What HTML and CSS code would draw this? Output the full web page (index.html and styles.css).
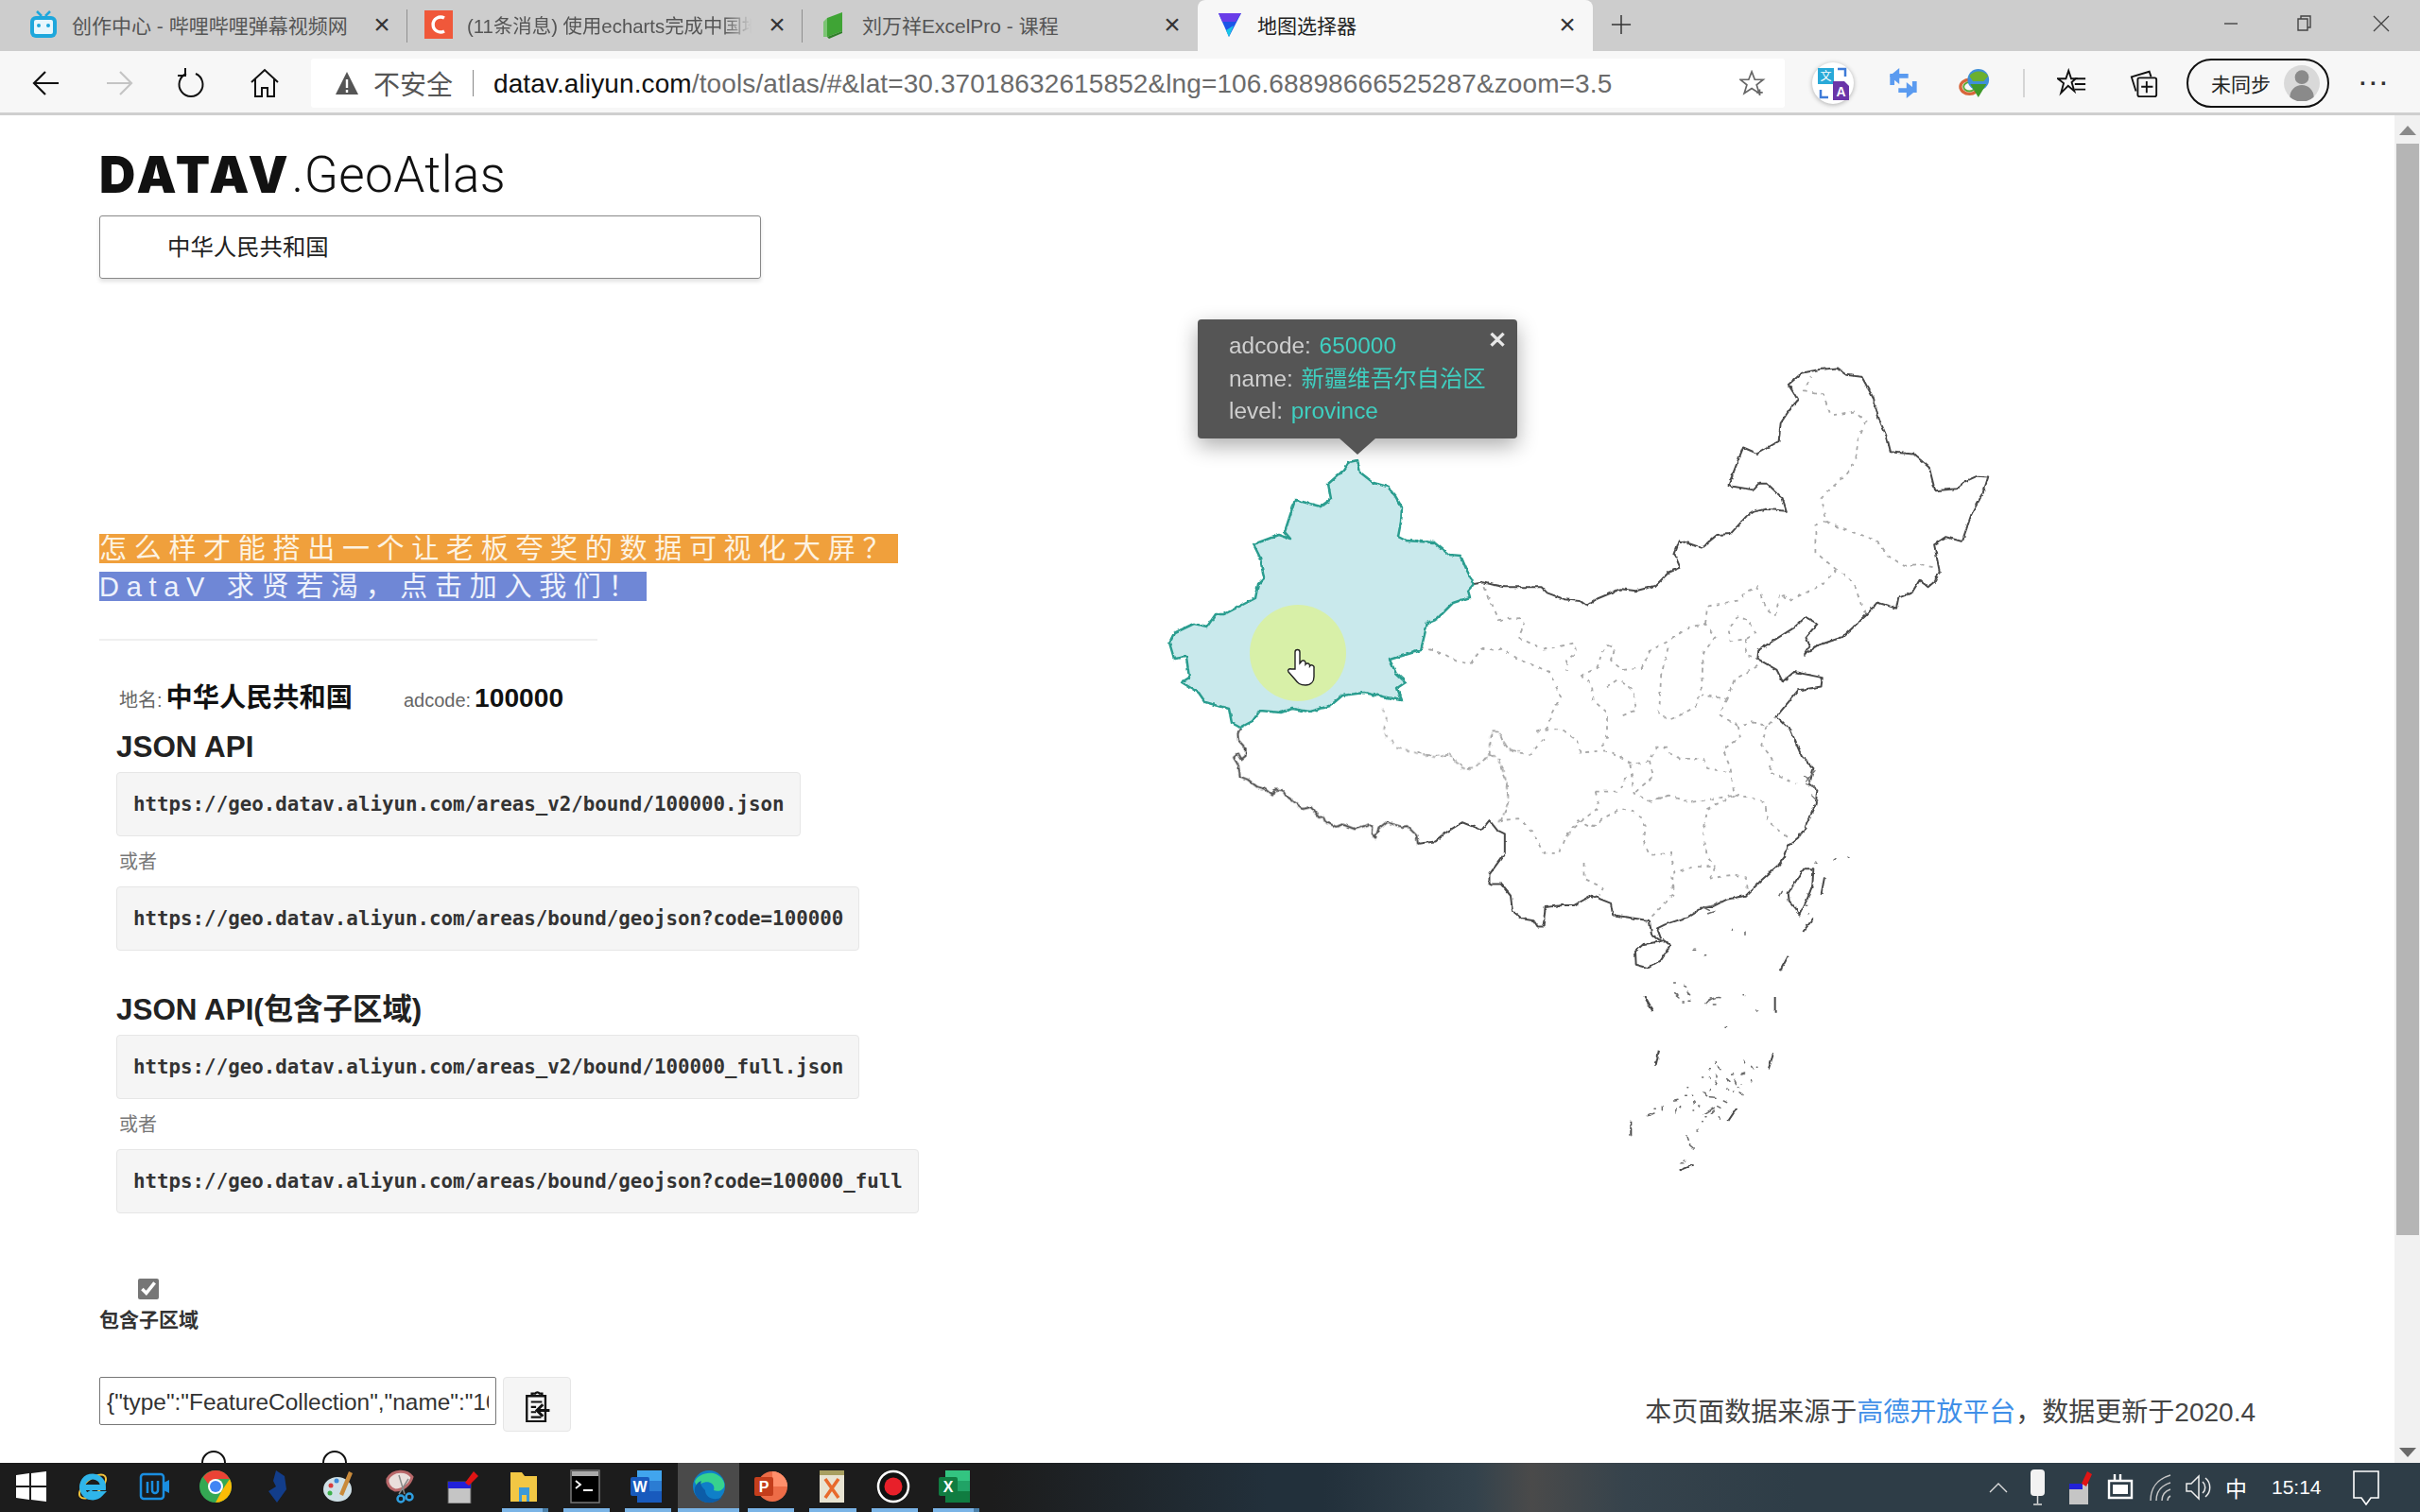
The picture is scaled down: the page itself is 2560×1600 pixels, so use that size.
FILE: index.html
```html
<!DOCTYPE html>
<html lang="zh-CN">
<head>
<meta charset="utf-8">
<title>地图选择器</title>
<link rel="stylesheet" href="styles.css">
</head>
<body>
<div class="screen">
  <header class="tabstrip">
    <div class="tab tab-first">
      <svg class="fav" viewBox="0 0 30 30"><path d="M8 1l5 5M22 1l-5 5" stroke="#1ea7dc" stroke-width="2.5" fill="none"/><rect x="1" y="6" width="28" height="23" rx="6" fill="#1ea7dc"/><rect x="5" y="10" width="20" height="15" rx="2" fill="#e8f7fd"/><circle cx="10" cy="16" r="2" fill="#1ea7dc"/><circle cx="20" cy="16" r="2" fill="#1ea7dc"/></svg>
      <span class="tab-title">创作中心 - 哔哩哔哩弹幕视频网</span><span class="tab-x">×</span>
    </div>
    <div class="tab">
      <svg class="fav" viewBox="0 0 30 30"><rect y="0" width="30" height="30" fill="#f0583a"/><path d="M21 8a8 8 0 1 0 0 14" stroke="#fff" stroke-width="3.4" fill="none"/></svg>
      <span class="tab-title tab-fade">(11条消息) 使用echarts完成中国地图</span><span class="tab-x">×</span>
    </div>
    <div class="tab tab-last">
      <svg class="fav" viewBox="0 0 30 30"><path d="M8 8L24 2v20L8 28z" fill="#3fa435"/><path d="M4 12l4-4v20H4z" fill="#7cc474"/><path d="M8 28l16-6v2L10 30z" fill="#2f7f28"/></svg>
      <span class="tab-title">刘万祥ExcelPro - 课程</span><span class="tab-x">×</span>
    </div>
    <div class="tab tab-active">
      <svg class="fav" viewBox="0 0 30 30"><path d="M4 3h24L15 28z" fill="#1c55e8"/><path d="M4 3h24l-6 9H8z" fill="#6a3de8"/><path d="M12 21l3 7 5-12z" fill="#19c6e6"/></svg>
      <span class="tab-title">地图选择器</span><span class="tab-x">×</span>
    </div>
    <svg class="newtab" viewBox="0 0 24 24"><path d="M12 1v22M1 12h22" stroke="#333" stroke-width="1.6"/></svg>
    <div class="winctl">
      <svg viewBox="0 0 20 20"><path d="M3 10h14" stroke="#444" stroke-width="1.4"/></svg>
      <svg viewBox="0 0 20 20"><path d="M4 5h10v12H4zM7 5V2h10v12h-3" stroke="#444" stroke-width="1.4" fill="none"/></svg>
      <svg viewBox="0 0 20 20"><path d="M2 2l16 16M18 2L2 18" stroke="#444" stroke-width="1.3"/></svg>
    </div>
  </header>

  <nav class="toolbar">
    <svg class="tb tb-back" viewBox="0 0 32 32"><path d="M29 16H4M15 4L3 16l12 12" stroke="#111" stroke-width="2.2" fill="none"/></svg>
    <svg class="tb tb-fwd" viewBox="0 0 32 32"><path d="M3 16h25M17 4l12 12-12 12" stroke="#c4c4c4" stroke-width="2.2" fill="none"/></svg>
    <svg class="tb tb-reload" viewBox="0 0 32 32"><path d="M11 6a12.500 12.500 0 1 0 10 0" stroke="#111" stroke-width="2" fill="none"/><path d="M10 0v8H2" stroke="#111" stroke-width="2" fill="none"/></svg>
    <svg class="tb tb-home" viewBox="0 0 32 32"><path d="M2 15L16 2l14 13M6 12v18h7v-9h6v9h7V12" stroke="#111" stroke-width="2" fill="none"/></svg>
    <div class="address">
      <svg class="warn" viewBox="0 0 26 26"><path d="M13 1L25 25H1z" fill="#555"/><path d="M13 9v9M13 20v3" stroke="#fff" stroke-width="2.400"/></svg>
      <span class="insecure">不安全</span>
      <span class="addr-sep"></span>
      <span class="url"><b class="host">datav.aliyun.com</b>/tools/atlas/#&amp;lat=30.37018632615852&amp;lng=106.68898666525287&amp;zoom=3.5</span>
      <svg class="addstar" viewBox="0 0 30 30"><path d="M14 2l3.500 9h9.500l-7.500 6 3 9.500L14 21l-8.500 5.500 3-9.500L1 11h9.500z" stroke="#666" stroke-width="1.800" fill="none"/><path d="M23 22v7M19.500 25.500h7" stroke="#666" stroke-width="1.800"/></svg>
    </div>
    <div class="ext ext-translate">
      <svg viewBox="0 0 44 44"><rect x="6" y="6" width="17" height="17" fill="#29a9d8"/><text x="14.500" y="19" class="ext-t1">文</text><path d="M27 7h8v8M17 37H9v-8" stroke="#3e7bd8" stroke-width="2.500" fill="none"/><path d="M22 20h12l5 5v15H22z" fill="#6a35a8"/><text x="30.500" y="36" class="ext-t2">A</text></svg>
    </div>
    <svg class="tb ext-sync" viewBox="0 0 36 36"><path d="M6 20V10h18M31 16v10H13" stroke="#5b9bf0" stroke-width="5" fill="none"/><path d="M14 1L3 10l11 9zM22 17l11 9-11 9z" fill="#5b9bf0"/></svg>
    <svg class="tb ext-idm" viewBox="0 0 36 36"><ellipse cx="12" cy="22" rx="10" ry="8" fill="none" stroke="#d8663a" stroke-width="3.500"/><ellipse cx="12" cy="22" rx="6.500" ry="5" fill="none" stroke="#58a832" stroke-width="2"/><circle cx="22" cy="14" r="12" fill="#3f8fd8"/><path d="M12 10c5-7 16-7 21 0l-5 6H16z" fill="#6cb02e"/><path d="M13 19l9 15 9-15z" fill="#3f9a2a"/></svg>
    <span class="tb-sep"></span>
    <svg class="tb tb-fav" viewBox="0 0 34 34"><path d="M13 3l3 9h5l-4.500 4 3 10-7-6-8 8 3-11L1 12h9z" stroke="#111" stroke-width="2" fill="none"/><path d="M20 12h12M20 18h12M20 24h12" stroke="#111" stroke-width="2"/></svg>
    <svg class="tb tb-coll" viewBox="0 0 34 34"><path d="M8 26L3 10l20-6 2 6" stroke="#111" stroke-width="2" fill="none"/><rect x="10" y="11" width="21" height="21" rx="2" stroke="#111" stroke-width="2" fill="#f7f7f7"/><path d="M20 15v13M14 21h13" stroke="#111" stroke-width="2"/></svg>
    <div class="profile">
      <span class="profile-text">未同步</span>
      <svg class="avatar" viewBox="0 0 36 36"><circle cx="18" cy="18" r="18" fill="#d9d9d9"/><circle cx="18" cy="12" r="7" fill="#8a8a8a"/><path d="M6 32a12 12 0 0 1 24 0 18 18 0 0 1-24 0z" fill="#8a8a8a"/></svg>
    </div>
    <span class="more">···</span>
  </nav>

  <div class="viewport">
    <main class="page">
      <svg class="map" viewBox="0 122 2533 1426">
        <defs>
          <filter id="wiggle" filterUnits="userSpaceOnUse" x="1200" y="340" width="950" height="950">
            <feTurbulence type="fractalNoise" baseFrequency="0.16" numOctaves="2" seed="4"/>
            <feDisplacementMap in="SourceGraphic" scale="3.5" xChannelSelector="R" yChannelSelector="G"/>
          </filter>
        </defs>
        <g filter="url(#wiggle)">
        <g transform="translate(1500 360) scale(.40816)">
          <g class="prov">
            <polyline points="170,640 178,660 190,680 210,725 240,722 270,720 275,740 260,770 290,785 325,800 365,795 405,785 410,810 385,830 385,855"/>
            <polyline points="5,795 40,805 70,815 100,832 135,840 165,800 195,805 220,800 265,830 305,845 340,860 352,885 370,925 345,970 335,1005 300,1015 340,1010 375,1010 415,1040 420,1070 470,1065 505,1070 530,1085 560,1100 600,1090 620,1055 650,1055"/>
            <polyline points="0,1070 40,1078 80,1075 100,1095 130,1110 160,1098 185,1075 190,1015 210,1015 220,1040 235,1060 265,1070 290,1075 330,1030"/>
            <polyline points="185,1075 210,1085 218,1120 230,1150 235,1200 215,1245 260,1240 285,1262 300,1280 325,1330 365,1330 380,1290 415,1245 450,1265 480,1240 525,1215 565,1225 590,1260 585,1300 600,1335 655,1330 665,1380 690,1372 720,1365 770,1365 760,1395 820,1385 850,1395 855,1425"/>
            <polyline points="420,870 450,890 455,935 490,965 490,1030 470,1065"/>
            <polyline points="420,870 465,850 475,815 490,790 510,800 500,830 530,855 580,850 600,805 640,785 665,770 700,745 745,735 770,770 740,810 735,900 720,950 680,972 650,985 625,970 630,870 650,790"/>
            <polyline points="745,735 750,690 790,682 830,675 855,650 880,640 905,700 925,715 940,655 960,675 1005,655 1050,630 1085,595 1130,630 1150,690 1165,710"/>
            <polyline points="1085,595 1030,550 1030,480 1060,470 1045,410 1075,380 1110,350 1135,310 1140,260 1160,210 1130,185 1070,195 1050,140 1000,130 1020,95"/>
            <polyline points="1060,470 1100,490 1150,505 1190,520 1220,560 1260,585 1300,580 1340,590"/>
            <polyline points="830,715 805,750 810,780 850,775 875,760 860,730 830,715"/>
            <polyline points="850,775 850,815 880,825"/>
            <polyline points="880,845 820,880 800,930 735,920"/>
            <polyline points="800,930 780,970 830,1000 865,990 905,1000 930,975"/>
            <polyline points="830,1000 835,1030 790,1060 810,1110 820,1180 860,1185 900,1200 905,1245 960,1290"/>
            <polyline points="820,1180 750,1215 740,1280 750,1340 770,1365"/>
            <polyline points="650,1180 600,1195 560,1175 550,1100"/>
            <polyline points="460,1170 520,1170 545,1120"/>
            <polyline points="460,1170 470,1210 420,1250 380,1290"/>
            <polyline points="600,1195 650,1180 700,1198 730,1195 820,1180"/>
            <polyline points="600,1090 610,1130 560,1175"/>
            <polyline points="650,1070 680,1085 740,1085 750,1110 810,1120"/>
            <polyline points="905,1000 890,1050 920,1085 910,1120 980,1150"/>
            <polyline points="590,1510 660,1440 660,1380"/>
            <polyline points="430,1355 430,1395 480,1420 470,1440"/>
            <polyline points="490,900 520,880 560,910 565,960 525,975"/>
          </g>
          <polyline class="coast" points="145,632 170,628 195,634 225,640 320,640 335,655 380,672 420,676 437,688 465,670 525,645 565,650 615,637 650,602 680,590 665,555 678,520 705,528 735,538 775,505 810,502 850,458 870,445 900,438 955,443 945,410 905,372 885,372 870,388 820,380 805,375 843,278 880,294 935,262 940,215 960,185 985,155 960,115 995,85 1040,76 1085,72 1110,90 1150,95 1165,122 1180,150 1195,205 1215,250 1225,290 1285,295 1325,330 1340,390 1395,385 1420,365 1450,352 1478,354 1465,395 1435,450 1410,522 1368,510 1338,530 1352,600 1340,625 1322,640 1300,622 1280,655 1245,668 1240,695 1190,680 1160,715 1100,770 1040,790 1000,815 1015,790 1005,770 1035,735 1005,718 975,745 935,770 880,805 878,825 930,855 945,885 975,860 1048,875 1045,898 985,908 930,975 965,1010 995,1080 1025,1110 1015,1150 1035,1165 1030,1205 1000,1270 985,1290 960,1310 950,1340 935,1360 890,1400 850,1440 800,1450 760,1470 740,1470 700,1495 640,1515 620,1525 630,1552"/>
          <polyline class="coast" points="600,1505 505,1490 500,1460 450,1440 405,1465 375,1465 330,1470 325,1520 310,1520 300,1505 270,1500 245,1480 240,1440 215,1410 185,1410 185,1385 225,1330 225,1280 205,1270 185,1245 165,1270 115,1250 75,1275 45,1300 0,1305"/>
          <polyline class="coast" points="600,1505 605,1540 628,1556"/>
          <path class="coast coast-thin" d="M1000 1130l20 15M1005 1150l25 10M1020 1180l15 15M1030 1115l-25 30M740 1470l30 -6"/>
        </g>
        <g transform="translate(1270 740) scale(.33333)">
          <g class="prov">
            <polyline points="578,30 590,60 580,105 620,150 685,170 750,185 790,175 825,215 850,225 915,180 940,180 965,240 975,300 978,330 965,360 945,390"/>
            <polyline points="915,180 920,100 945,100 965,140 990,165 1020,165"/>
          </g>
          <polyline class="coast" points="125,92 118,110 120,130 143,155 143,180 130,190 120,172 105,185 120,210 125,245 150,255 180,278 205,285 228,305 235,287 260,288 270,305 290,320 325,348 350,342 375,375 390,372 395,388 430,405 450,397 490,412 535,397 547,405 545,430 555,440 565,410 590,390 640,405 655,402 685,432 690,460"/>
        </g>
        <g transform="translate(1560 880) scale(.33333)">
          <polygon class="coast" points="600,345 620,360 600,395 590,410 550,433 512,422 510,380 535,358 580,350"/>
          <polygon class="coast" points="1045,118 1075,118 1072,170 1055,215 1030,265 1020,245 998,220 995,195 1030,140"/>
          <path class="coast" d="M1110 145L1100 198M1075 275L1042 318M995 395L968 445M953 525V575M948 705L932 755M832 878L805 918M496 920V965M585 695L575 740M538 522L565 570M650 1075L692 1058"/>
          <path class="dots" d="M1080 100h3M1140 90l6 -4M1183 82h2M968 205l8 -15M1052 235h3M1058 260h2M820 305v8M858 318v10M693 376h8M730 392h4M632 483h5M665 490l6 3M635 512l10 8M640 522l8 6M675 510l8 8M660 543h4M678 535h3M735 545q15 -20 45 -18M757 549h8M852 518h2M893 570h3M795 622h6M766 730v4M745 755h3M770 745l10 10M722 780h3M745 780h3M768 775v8M765 795l4 8M800 785l10 8M815 772l6 -2M845 772l12 -4M856 730l4 4M878 745l6 10M895 748h2M878 790v4M825 790l5 10M845 802h3M800 820h3M820 823h3M835 812h2M840 828l12 8M675 812h2M725 828l12 8M748 818v3M745 842l20 2M665 838h8M690 838h2M635 852l10 -2M695 858l2 4M710 870l4 4M690 885h5M650 875h3M638 880l2 12M595 872v12M570 880h4M550 902l20 -8M730 895l30 -18M760 885l-10 10M770 875l10 5M790 855l10 5M775 905l3 8M732 905h3M722 920h2M705 948h3M675 968l5 15M682 995l12 10M655 1052h6M665 1047h3"/>
          <path class="dots" d="M725 240l20 10M740 260l18 -6"/>
        </g>
        <polygon class="xj" points="1436,487 1439,500 1453,511 1468,515 1476,525 1483,537 1482,552 1479,568 1487,572 1517,574 1533,587 1545,588 1552,604 1559,618 1553,625 1555,632 1537,638 1520,655 1510,659 1503,688 1470,698 1477,713 1487,722 1478,728 1483,741 1467,738 1443,733 1420,736 1407,747 1385,753 1367,750 1355,754 1333,752 1325,763 1312,770 1303,765 1300,750 1275,743 1268,733 1250,722 1258,717 1255,695 1242,697 1237,680 1242,670 1263,660 1277,663 1286,650 1295,650 1328,633 1331,618 1337,612 1333,590 1326,576 1353,566 1365,570 1359,563 1370,529 1397,536 1408,528 1405,512 1422,497 1427,489"/>
        </g>
        <circle class="ripple" cx="1373" cy="691" r="51"/>
        <path class="hand" transform="translate(-3 14)" d="M1373 694v-18a2.500 2.500 0 0 1 5 0v12l1 -1a2.500 2.500 0 0 1 5 1v1a2.500 2.500 0 0 1 4.500 1v1a2.500 2.500 0 0 1 4.500 2v9c0 5 -3 9 -9 9s-8 -2 -11 -6l-7 -8c-1.500 -2 1 -4 3 -3z"/>
      </svg>

      <div class="sidebar">
        <h1 class="logo"><b>DATAV</b><span>.GeoAtlas</span></h1>
        <div class="search">中华人民共和国</div>
        <div class="ads">
          <span class="ad ad-orange">怎么样才能搭出一个让老板夸奖的数据可视化大屏？</span>
          <span class="ad ad-blue">DataV 求贤若渴，点击加入我们！</span>
        </div>
        <hr class="rule">
        <div class="place">
          <span class="place-l">地名:</span><b class="place-v">中华人民共和国</b>
          <span class="place-l place-gap">adcode:</span><b class="place-v">100000</b>
        </div>
        <section class="api">
          <h2>JSON API</h2>
          <code class="url-box box-a">https://geo.datav.aliyun.com/areas_v2/bound/100000.json</code>
          <p class="or">或者</p>
          <code class="url-box">https://geo.datav.aliyun.com/areas/bound/geojson?code=100000</code>
        </section>
        <section class="api api-next">
          <h2>JSON API(包含子区域)</h2>
          <code class="url-box">https://geo.datav.aliyun.com/areas_v2/bound/100000_full.json</code>
          <p class="or">或者</p>
          <code class="url-box">https://geo.datav.aliyun.com/areas/bound/geojson?code=100000_full</code>
        </section>
        <input class="check" type="checkbox" checked>
        <div class="check-label">包含子区域</div>
        <div class="json-row">
          <div class="json-input"><span>{"type":"FeatureCollection","name":"100000"</span></div>
          <button class="copy">
            <svg viewBox="0 0 30 38"><path d="M9 7V4h4a3 3 0 0 1 5 0h3v3zM5 7h20v30H3V7z" fill="none" stroke="#111" stroke-width="2.600"/><path d="M8 14h13M8 20h6M8 26h6M8 32h12" stroke="#111" stroke-width="2.400"/><path d="M30 24H16M22 17l-7 7 7 7" stroke="#111" stroke-width="3.400" fill="none"/></svg>
          </button>
        </div>
        <div class="radios"><span class="radio"></span><span class="radio"></span></div>
      </div>

      <div class="popup">
        <span class="popup-x">✕</span>
        <div>adcode: <em>650000</em></div>
        <div>name: <em>新疆维吾尔自治区</em></div>
        <div>level: <em>province</em></div>
      </div>
      <p class="source">本页面数据来源于<a>高德开放平台</a>，数据更新于2020.4</p>
    </main>
    <aside class="scrollbar">
      <span class="arrow-up"></span>
      <span class="thumb"></span>
      <span class="arrow-down"></span>
    </aside>
  </div>

  <footer class="taskbar">
    <div class="apps">
      <div class="app"><svg viewBox="0 0 36 36"><path d="M2 6l14-2v13H2zM18 4l16-2v15H18zM2 19h14v13L2 30zM18 19h16v15l-16-2z" fill="#fff"/></svg></div>
      <div class="app"><svg viewBox="0 0 36 36"><ellipse cx="18" cy="18" rx="17" ry="8" transform="rotate(-40 18 18)" fill="none" stroke="#f0c23c" stroke-width="2"/><path d="M9 19h20a11 11 0 1 0-3 7h-6a6 6 0 0 1-6-3" fill="none" stroke="#2fb5ea" stroke-width="6"/></svg></div>
      <div class="app"><svg viewBox="0 0 36 36"><rect x="4" y="5" width="24" height="26" rx="3" fill="none" stroke="#1a8ee0" stroke-width="2.500"/><path d="M11 13v12M16 12v10a3 3 0 0 0 6 0V12" stroke="#1a8ee0" stroke-width="2.500" fill="none"/><path d="M28 14l6-3v14l-6-3z" fill="#1a8ee0"/></svg></div>
      <div class="app"><svg viewBox="0 0 36 36"><circle cx="18" cy="18" r="17" fill="#34a853"/><path d="M18 1a17 17 0 0 1 15 9H18l-8 5-5-7A17 17 0 0 1 18 1z" fill="#ea4335"/><path d="M33 10a17 17 0 0 1-15 25l7-13z" fill="#fbbc05"/><circle cx="18" cy="18" r="8" fill="#fff"/><circle cx="18" cy="18" r="6" fill="#4285f4"/></svg></div>
      <div class="app"><svg viewBox="0 0 36 36"><path d="M17 1l9 6 2 14-10 14-9-12 8-5-3-6z" fill="#123d8a"/></svg></div>
      <div class="app"><svg viewBox="0 0 36 36"><ellipse cx="16" cy="21" rx="15" ry="13" fill="#cfe0e6"/><circle cx="9" cy="17" r="2.500" fill="#d83c3c"/><circle cx="15" cy="12" r="2.500" fill="#3c8ad8"/><circle cx="8" cy="25" r="2.500" fill="#3cb04a"/><path d="M28 2l4 2-10 24-4-2z" fill="#c98a3a"/></svg></div>
      <div class="app"><svg viewBox="0 0 36 36"><path d="M4 10C10 0 24 0 30 8c-2 8-10 14-18 14C6 20 3 15 4 10z" fill="#eadfdc" stroke="#b9686a" stroke-width="3"/><path d="M16 6l6 20M26 10l-10 16" stroke="#8a8a8a" stroke-width="1.500"/><circle cx="18" cy="31" r="3.500" fill="none" stroke="#2f9fe0" stroke-width="2.500"/><circle cx="27" cy="29" r="3.500" fill="none" stroke="#2f9fe0" stroke-width="2.500"/></svg></div>
      <div class="app"><svg viewBox="0 0 36 36"><rect x="3" y="13" width="24" height="23" fill="#c5c5c5" stroke="#555"/><rect x="3" y="13" width="24" height="7" fill="#2222d8"/><path d="M21 14l9-12 5 5-10 10z" fill="#e01414"/></svg></div>
      <div class="app app-run app-group"><svg viewBox="0 0 36 36"><path d="M4 3h12l3 4h13v27H4z" fill="#f2c744"/><path d="M13 19h11v15H13z" fill="#3c9ad8"/><rect x="16" y="27" width="5" height="7" fill="#f2c744"/></svg></div>
      <div class="app app-run"><svg viewBox="0 0 36 36"><rect x="3" y="1" width="30" height="34" fill="#000" stroke="#777" stroke-width="1.500"/><rect x="4" y="2" width="28" height="5" fill="#aaa"/><path d="M8 12l5 4-5 4M16 22h10" stroke="#fff" stroke-width="1.800" fill="none"/></svg></div>
      <div class="app app-run"><svg viewBox="0 0 36 36"><rect x="8" y="1" width="26" height="34" rx="2" fill="#2b7cd3"/><rect x="8" y="1" width="26" height="11" fill="#41a5ee"/><rect x="8" y="23" width="26" height="12" fill="#185abd"/><rect x="1" y="8" width="20" height="20" rx="2" fill="#185abd"/><text x="11" y="24" class="app-letter">W</text></svg></div>
      <div class="app app-run app-active"><svg viewBox="0 0 36 36"><circle cx="18" cy="18" r="17" fill="#0f7fc8"/><path d="M3 13C6 3 28 -2 34 14c2 8-6 10-11 8 3-9-12-13-17-2" fill="#37d28e"/><path d="M14 22c0 8 10 12 18 7-6 8-22 9-28-2-3-6 0-13 6-15-2 4 1 7 4 10z" fill="#0c5da8"/></svg></div>
      <div class="app app-run"><svg viewBox="0 0 36 36"><circle cx="20" cy="18" r="16" fill="#ed6c47"/><path d="M20 2a16 16 0 0 1 16 16H20z" fill="#ff8f6b"/><rect x="1" y="8" width="20" height="20" rx="2" fill="#c43e1c"/><text x="11" y="24" class="app-letter">P</text></svg></div>
      <div class="app app-run"><svg viewBox="0 0 36 36"><rect x="5" y="1" width="26" height="34" fill="#e8e4d2"/><rect x="5" y="1" width="26" height="5" fill="#a8a060"/><path d="M11 10l14 20M25 10L11 30" stroke="#e86a2c" stroke-width="3.500"/></svg></div>
      <div class="app app-run"><svg viewBox="0 0 36 36"><circle cx="18" cy="18" r="16" fill="#111" stroke="#fff" stroke-width="2.500"/><circle cx="18" cy="18" r="9.500" fill="#e8202a"/></svg></div>
      <div class="app app-run app-group"><svg viewBox="0 0 36 36"><rect x="8" y="1" width="26" height="34" rx="2" fill="#21a366"/><rect x="8" y="1" width="26" height="11" fill="#33c481"/><rect x="8" y="23" width="26" height="12" fill="#107c41"/><rect x="1" y="8" width="20" height="20" rx="2" fill="#107c41"/><text x="11" y="24" class="app-letter">X</text></svg></div>
    </div>
    <div class="tray">
      <svg class="t-up" viewBox="0 0 20 12"><path d="M1 11l9-9 9 9" stroke="#ddd" stroke-width="1.400" fill="none"/></svg>
      <svg class="t-usb" viewBox="0 0 20 38"><rect x="2" y="0" width="15" height="28" rx="4" fill="#f2f2f2"/><path d="M9.500 28v8M5 37h9" stroke="#ddd" stroke-width="1.500"/></svg>
      <svg class="t-pin" viewBox="0 0 26 36"><rect x="1" y="14" width="20" height="22" fill="#c5c5c5"/><rect x="1" y="14" width="14" height="6" fill="#2222d8"/><path d="M14 14l6-13 5 3-6 13z" fill="#e01414"/></svg>
      <svg class="t-batt" viewBox="0 0 30 30"><path d="M3 8h24v18H3zM9 1v7M15 1v7" stroke="#fff" stroke-width="2.400" fill="none"/><rect x="7" y="12" width="16" height="10" fill="#fff"/></svg>
      <svg class="t-wifi" viewBox="0 0 26 30"><path d="M3 29C3 16 10 6 24 2M9 29c0-9 5-16 15-19M15 29c0-5 3-10 9-12M21 29c0-2 1-4 3-5" stroke="#c8c8c8" stroke-width="1.500" fill="none"/></svg>
      <svg class="t-vol" viewBox="0 0 28 30"><path d="M1 11h5l8-8v24l-8-8H1zM18 9a8 8 0 0 1 0 12M21 5a13 13 0 0 1 0 20" stroke="#eee" stroke-width="1.500" fill="none"/></svg>
      <span class="t-ime">中</span>
      <span class="t-time">15:14</span>
      <svg class="t-note" viewBox="0 0 30 38"><path d="M2 2h26v28H20l-5 7-5-7H2z" stroke="#fff" stroke-width="1.600" fill="none"/></svg>
    </div>
  </footer>
</div>
</body>
</html>
```

FILE: styles.css
```css
* { box-sizing: border-box; }
html, body { margin: 0; padding: 0; }
body {
  width: 2560px;
  height: 1600px;
  overflow: hidden;
  font-family: "Liberation Sans", "Noto Sans CJK SC", sans-serif;
  color: #333;
  background: #fff;
}
.screen { display: flex; flex-direction: column; height: 1600px; }

/* tab strip */
.tabstrip { display: flex; align-items: stretch; height: 54px; background: #cdcdcd; flex: none; }
.tab { display: flex; align-items: center; width: 418px; padding: 0 16px 2px 18px; position: relative; }
.tab-first { width: 431px; padding-left: 31px; }
.tab-first::after, .tab:nth-child(2)::after {
  content: ""; position: absolute; right: 0; top: 10px; bottom: 9px; width: 1px; background: #8f8f8f;
}
.tab-active { background: #f7f7f7; border-radius: 8px 8px 0 0; width: 418px; }
.fav { width: 30px; height: 30px; flex: none; margin-right: 15px; }
.tab-title { flex: 1; min-width: 0; font-size: 21px; color: #555; white-space: nowrap; overflow: hidden; }
.tab-active .tab-title { color: #222; }
.tab-fade { font-size: 20.400px; -webkit-mask-image: linear-gradient(to right, #000 90%, transparent); mask-image: linear-gradient(to right, #000 90%, transparent); margin-right: 16px; }
.tab-x { width: 22px; text-align: center; font-size: 30px; line-height: 30px; color: #333; font-weight: 300; flex: none; }
.newtab { width: 22px; height: 22px; margin: 15px 0 0 19px; }
.winctl { margin-left: auto; display: flex; padding: 15px 31px 0 0; }
.winctl svg { width: 20px; height: 20px; }
.winctl svg + svg { margin-left: 57px; }
.winctl svg + svg + svg { margin-left: 62px; }

/* toolbar */
.toolbar {
  display: flex; align-items: center; height: 68px; flex: none; background: #f7f7f7;
  border-bottom: 3px solid #cfcfcf; padding-top: 3px; position: relative;
}
.tb { flex: none; width: 32px; height: 32px; }
.tb-back { margin-left: 33px; }
.tb-fwd { margin-left: 45px; }
.tb-reload { margin-left: 44px; }
.tb-home { margin-left: 46px; }
.address {
  display: flex; align-items: center; width: 1559px; height: 52px; margin-left: 33px; flex: none;
  background: #fff; padding-left: 25px; border-radius: 3px;
}
.warn { width: 26px; height: 26px; margin-right: 15px; flex: none; }
.insecure { font-size: 28px; color: #555; width: 85px; white-space: nowrap; }
.addr-sep { width: 1px; height: 28px; background: #888; margin: 0 21px 0 20px; }
.url { font-size: 28px; color: #6b6b6b; white-space: nowrap; flex: 1; letter-spacing: .11px; padding-top: 2px; }
.host { font-weight: 400; color: #111; }
.addstar { width: 28px; height: 28px; margin-right: 20px; flex: none; }
.ext { flex: none; }
.ext-translate {
  width: 44px; height: 44px; margin-left: 29px; border-radius: 50%; background: #fff;
  box-shadow: 0 1px 5px rgba(0,0,0,.3);
}
.ext-translate svg { width: 44px; height: 44px; display: block; }
.ext-t1 { font-size: 12px; fill: #fff; text-anchor: middle; }
.ext-t2 { font-size: 14px; fill: #fff; text-anchor: middle; font-weight: 700; }
.ext-sync { margin-left: 35px; width: 34px; height: 36px; }
.ext-idm { margin-left: 42px; width: 34px; height: 34px; }
.tb-sep { width: 2px; height: 30px; background: #d5d5d5; margin-left: 34px; flex: none; }
.tb-fav { margin-left: 34px; }
.tb-coll { margin-left: 44px; }
.profile {
  display: flex; align-items: center; justify-content: space-between; width: 151px; height: 52px;
  margin-left: 29px; border: 2px solid #111; border-radius: 26px; padding: 0 8px 0 24px; flex: none;
}
.profile-text { font-size: 21px; color: #222; white-space: nowrap; }
.avatar { width: 38px; height: 38px; }
.more { margin-left: 32px; font-size: 24px; font-weight: 700; color: #333; letter-spacing: 3px; }

/* page */
.viewport { display: flex; flex: 1; min-height: 0; }
.page { flex: 1; position: relative; overflow: hidden; background: #fff; }
.map { position: absolute; left: 0; top: 0; width: 2533px; height: 1426px; }
.prov polyline { fill: none; stroke: #a8a8a8; stroke-width: 1.800px; stroke-dasharray: 4 5.500; vector-effect: non-scaling-stroke; }
.coast { fill: none; stroke: #4a4a4a; stroke-width: 2px; stroke-linejoin: round; vector-effect: non-scaling-stroke; }
.coast-thin { stroke-width: 1.200px; stroke: #777; }
.dots { fill: none; stroke: #6a6a6a; stroke-width: 1.500px; stroke-linecap: round; vector-effect: non-scaling-stroke; }
.xj { fill: #c9e9ec; stroke: #2a9d8f; stroke-width: 2.500px; stroke-linejoin: round; }
.ripple { fill: #d8f0a8; }
.hand { fill: #fff; stroke: #222; stroke-width: 1.400px; }

.sidebar { position: relative; padding: 33px 0 0 105px; width: 1000px; }
.logo { margin: 0; height: 60px; line-height: 60px; font-weight: 400; font-size: 53px; color: #111; white-space: nowrap; display: flex; }
.logo b { font-family: Inter, "Liberation Sans", sans-serif; font-weight: 900; letter-spacing: 3.900px; }
.logo span { font-family: Roboto, "Liberation Sans", sans-serif; font-weight: 300; font-size: 53px; letter-spacing: .4px; }
.search {
  width: 700px; height: 67px; margin-top: 13px; border: 1px solid #888; border-radius: 3px;
  box-shadow: 0 3px 4px rgba(0,0,0,.12); padding-left: 71px; font-size: 24.400px; line-height: 65px; color: #222;
}
.ads { display: flex; flex-direction: column; align-items: flex-start; gap: 9px; margin-top: 270px; }
.ad { height: 31px; line-height: 33px; font-size: 29px; letter-spacing: 7.700px; color: #fdf3e2; white-space: nowrap; overflow: hidden; }
.ad-orange { background: #f0a03c; width: 845px; }
.ad-blue { background: #6f87d6; width: 579px; color: #eef2fc; }
.rule { width: 527px; height: 2px; margin: 40px 0 0; border: 0; background: #efefef; }
.place { display: flex; align-items: baseline; height: 40px; margin: 40px 0 0 21px; line-height: 40px; }
.place-l { font-size: 20px; color: #666; margin-right: 4px; }
.place-gap { margin-left: 54px; }
.place-v { font-size: 28.200px; color: #111; }
.api { margin-left: 18px; }
.api-next { margin-top: 43px; }
.api h2 { margin: 13px 0 0; height: 40px; line-height: 40px; font-size: 31.400px; font-weight: 700; color: #222; }
.api-next h2 { margin-top: 0; }
.url-box {
  display: block; width: fit-content; height: 68px; margin-top: 6px; padding: 0 16px 0 17px; line-height: 66px;
  background: #f5f5f5; border: 1px solid #e6e6e6; border-radius: 4px;
  font-family: "DejaVu Sans Mono", monospace; font-weight: 700; font-size: 20.800px; color: #333; white-space: nowrap;
}
.or { margin: 12px 0 11px 3px; height: 30px; line-height: 30px; font-size: 20px; color: #777; }
.or + .url-box { margin-top: 0; }
.check { display: block; width: 22px; height: 22px; margin: 69px 0 0 41px; accent-color: #767676; }
.check-label { height: 30px; line-height: 30px; margin-top: 7px; font-size: 21px; font-weight: 700; color: #333; }
.json-row { display: flex; align-items: flex-start; gap: 7px; margin-top: 45px; }
.json-input {
  width: 420px; height: 51px; border: 1px solid #777; border-radius: 2px; padding: 0 7px; line-height: 51px;
  font-size: 24.400px; color: #333; overflow: hidden; white-space: nowrap;
}
.json-input span { display: block; overflow: hidden; }
.copy {
  width: 72px; height: 58px; padding: 0; background: #f5f5f5; border: 1px solid #e6e6e6; border-radius: 4px;
  display: flex; align-items: center; justify-content: center;
}
.copy svg { width: 28px; height: 34px; margin-top: 4px; }
.radios { display: flex; gap: 102px; margin: 20px 0 0 108px; }
.radio { width: 26px; height: 26px; border: 2px solid #111; border-radius: 50%; }

.popup {
  position: absolute; left: 1267px; top: 216px; width: 338px; height: 126px; padding: 11px 0 0 33px;
  background: #555; border-radius: 4px; box-shadow: 0 8px 22px rgba(0,0,0,.32);
  font-size: 24.400px; line-height: 34.500px; color: #cfcfcf;
}
.popup::after {
  content: ""; position: absolute; left: 150px; top: 126px; border: 19px solid transparent;
  border-top: 17px solid #555; border-bottom: 0;
}
.popup em { font-style: normal; color: #3fcfc0; margin-left: 2px; }
.popup-x { position: absolute; right: 11px; top: 0; font-size: 24px; font-weight: 700; color: #e8e8e8; line-height: 44px; }
.source { position: absolute; right: 147px; top: 1354px; margin: 0; font-size: 28px; line-height: 38px; color: #444; white-space: nowrap; }
.source a { color: #3f8fe8; }

.scrollbar { width: 27px; flex: none; background: #f1f1f1; display: flex; flex-direction: column; align-items: center; padding-top: 11px; }
.arrow-up { border: 9px solid transparent; border-bottom: 10px solid #8a8a8a; border-top: 0; }
.thumb { width: 24px; height: 1155px; margin-top: 9px; background: #b5b5b5; }
.arrow-down { margin-top: auto; margin-bottom: 6px; border: 9px solid transparent; border-top: 10px solid #6a6a6a; border-bottom: 0; }

/* taskbar */
.taskbar {
  display: flex; justify-content: space-between; align-items: stretch; height: 52px; flex: none;
  background: linear-gradient(to right, #1c1c1c 0, #1c1c1c 1050px, #22303b 1340px, #22303b 1400px, #33424c 1560px, #4a4a4a 1620px, #36434c 1720px, #2e3d47 1900px, #2e3d47 2560px);
}
.apps { display: grid; grid-template-columns: repeat(16, 65.200px); }
.app { display: flex; align-items: center; justify-content: center; position: relative; padding-bottom: 2px; }
.app svg { width: 36px; height: 36px; }
.app-run::after { content: ""; position: absolute; left: 9px; right: 7px; bottom: 0; height: 4px; background: #7ab4e6; }
.app-group::before { content: ""; position: absolute; right: 7px; bottom: 0; width: 6px; height: 4px; background: #4a7fa8; z-index: 1; }
.app-active { background: #4a4a4a; }
.app-active::after { left: 0; right: 0; }
.app-letter { font-size: 16px; font-weight: 700; fill: #fff; text-anchor: middle; }
.tray { display: flex; align-items: center; color: #fff; padding-right: 0; }
.tray svg { flex: none; }
.t-up { width: 20px; height: 12px; margin-right: 22px; }
.t-usb { width: 20px; height: 38px; margin-right: 22px; }
.t-pin { width: 26px; height: 36px; margin-right: 14px; }
.t-batt { width: 30px; height: 30px; margin-right: 14px; }
.t-wifi { width: 26px; height: 30px; margin-right: 14px; }
.t-vol { width: 28px; height: 30px; margin-right: 14px; }
.t-ime { font-size: 23px; width: 36px; }
.t-time { font-size: 21px; margin-left: 13px; width: 69px; }
.t-note { width: 30px; height: 38px; margin: 0 42px 0 16px; }
```
